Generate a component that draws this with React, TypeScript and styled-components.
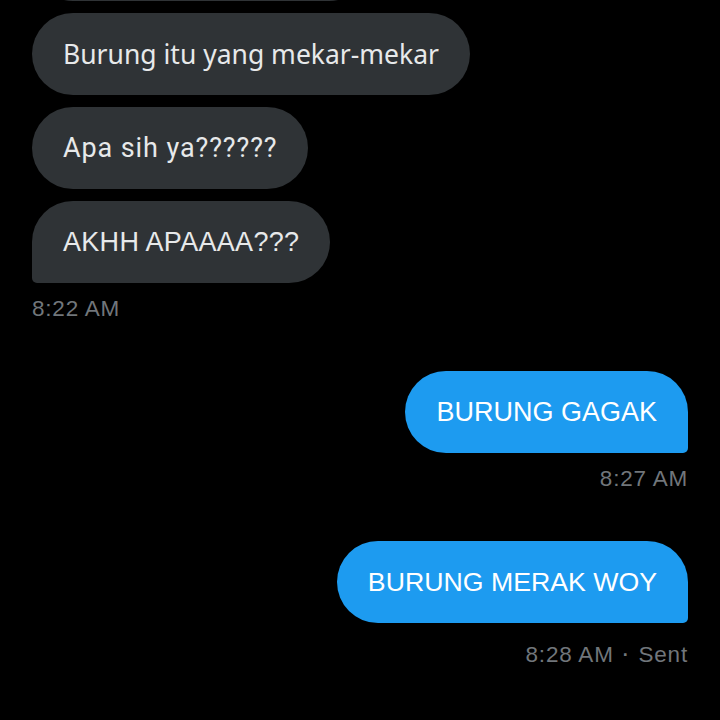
import React from "react";
import styled, { createGlobalStyle } from "styled-components";

const Global = createGlobalStyle`
  html, body { margin: 0; padding: 0; background: #000; }
  body { width: 720px; height: 720px; overflow: hidden; font-family: "Liberation Sans", Arial, sans-serif; }
`;

const Screen = styled.div`
  width: 720px;
  height: 720px;
  background: #000;
  overflow: hidden;
`;

const Thread = styled.div`
  display: flex;
  flex-direction: column;
  padding: 0 32px;
  margin-top: -81px;
`;

const Group = styled.div<{ $side: "left" | "right"; $top?: number }>`
  display: flex;
  flex-direction: column;
  align-items: ${(p) => (p.$side === "left" ? "flex-start" : "flex-end")};
  margin-top: ${(p) => p.$top ?? 0}px;
`;

const Bubble = styled.div<{
  $side: "left" | "right";
  $tail?: boolean;
  $font?: string;
  $size?: number;
  $ls?: number;
  $w?: number;
  $first?: boolean;
}>`
  box-sizing: border-box;
  height: 82px;
  display: flex;
  align-items: center;
  padding: 0 31px;
  margin-top: ${(p) => (p.$first ? 0 : 12)}px;
  ${(p) => (p.$w ? `width: ${p.$w}px;` : "")}
  font-family: ${(p) => p.$font ?? `"Liberation Sans", Arial, sans-serif`};
  font-size: ${(p) => p.$size ?? 27}px;
  letter-spacing: ${(p) => p.$ls ?? 0}px;
  white-space: nowrap;
  color: ${(p) => (p.$side === "left" ? "#e7e9ea" : "#ffffff")};
  background: ${(p) => (p.$side === "left" ? "#2f3336" : "#1d9bf0")};
  border-radius: 41px;
  ${(p) =>
    p.$tail
      ? p.$side === "left"
        ? "border-bottom-left-radius: 5px;"
        : "border-bottom-right-radius: 5px;"
      : ""}
`;

const Meta = styled.div<{ $top: number }>`
  margin-top: ${(p) => p.$top}px;
  font-family: "Liberation Sans", Arial, sans-serif;
  font-size: 22.5px;
  letter-spacing: 0.8px;
  line-height: 26px;
  color: #71767b;
  display: flex;
  align-items: center;
  gap: 9px;
  white-space: nowrap;
`;

const Dot = styled.span`
  font-size: 18px;
  font-weight: bold;
`;

export default function App() {
  return (
    <Screen>
      <Global />
      <Thread>
        <Group $side="left">
          <Bubble $side="left" $w={338} $first aria-hidden="true" />
          <Bubble $side="left" $font={`"Noto Sans", sans-serif`} $size={26.5}>
            Burung itu yang mekar-mekar
          </Bubble>
          <Bubble $side="left" $font={`Roboto, sans-serif`} $ls={0.9}>
            Apa sih ya??????
          </Bubble>
          <Bubble $side="left" $tail $ls={0.3}>
            AKHH APAAAA???
          </Bubble>
          <Meta $top={13}>8:22 AM</Meta>
        </Group>
        <Group $side="right" $top={49}>
          <Bubble $side="right" $tail $first>
            BURUNG GAGAK
          </Bubble>
          <Meta $top={13}>8:27 AM</Meta>
        </Group>
        <Group $side="right" $top={49}>
          <Bubble $side="right" $tail $first $size={26.7}>
            BURUNG MERAK WOY
          </Bubble>
          <Meta $top={19}>
            8:28 AM <Dot>·</Dot> Sent
          </Meta>
        </Group>
      </Thread>
    </Screen>
  );
}
